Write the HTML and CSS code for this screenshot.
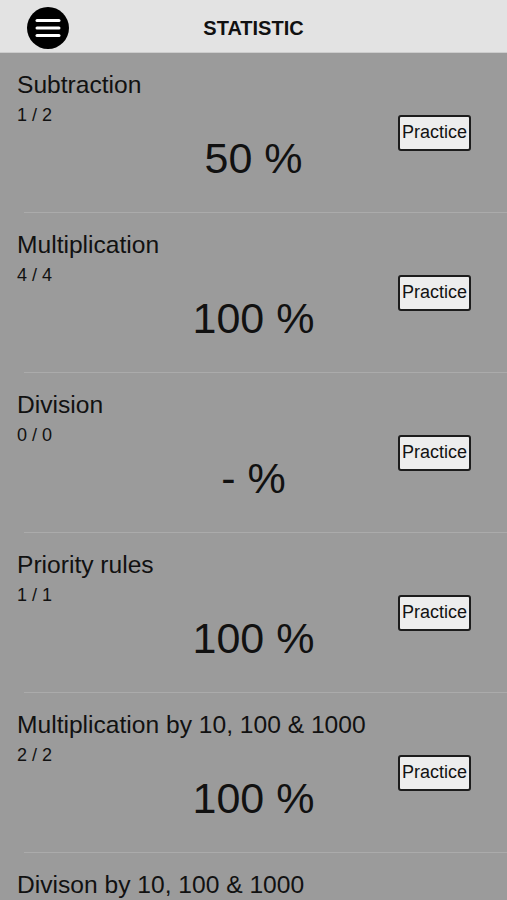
FILE: index.html
```html
<!DOCTYPE html>
<html lang="en">
<head>
<meta charset="utf-8">
<title>Statistic</title>
<link rel="stylesheet" href="styles.css">
</head>
<body>
<div class="app">
  <header class="topbar">
    <button class="menu" aria-label="Menu">
      <svg width="42" height="42" viewBox="0 0 42 42">
        <circle cx="21" cy="21" r="21" fill="#000"/>
        <g stroke="#fff" stroke-width="3" stroke-linecap="round">
          <line x1="10" y1="13.5" x2="32" y2="13.5"/>
          <line x1="10" y1="21" x2="32" y2="21"/>
          <line x1="10" y1="28.5" x2="32" y2="28.5"/>
        </g>
      </svg>
    </button>
    <h1 class="heading">STATISTIC</h1>
    <span class="spacer"></span>
  </header>
  <main class="list">
    <section class="row">
      <div class="info">
        <div class="title">Subtraction</div>
        <div class="count">1 / 2</div>
        <div class="pct">50 %</div>
      </div>
      <button class="practice">Practice</button>
    </section>
    <section class="row">
      <div class="info">
        <div class="title">Multiplication</div>
        <div class="count">4 / 4</div>
        <div class="pct">100 %</div>
      </div>
      <button class="practice">Practice</button>
    </section>
    <section class="row">
      <div class="info">
        <div class="title">Division</div>
        <div class="count">0 / 0</div>
        <div class="pct">- %</div>
      </div>
      <button class="practice">Practice</button>
    </section>
    <section class="row">
      <div class="info">
        <div class="title">Priority rules</div>
        <div class="count">1 / 1</div>
        <div class="pct">100 %</div>
      </div>
      <button class="practice">Practice</button>
    </section>
    <section class="row">
      <div class="info">
        <div class="title">Multiplication by 10, 100 &amp; 1000</div>
        <div class="count">2 / 2</div>
        <div class="pct">100 %</div>
      </div>
      <button class="practice">Practice</button>
    </section>
    <section class="row">
      <div class="info">
        <div class="title">Divison by 10, 100 &amp; 1000</div>
      </div>
    </section>
  </main>
</div>
</body>
</html>
```
FILE: styles.css
```css
html, body {
  margin: 0;
  padding: 0;
}
body {
  font-family: "Liberation Sans", Arial, sans-serif;
  color: #111;
  background: #9b9b9b;
}
.app {
  width: 507px;
  height: 900px;
  overflow: hidden;
  background: #9b9b9b;
}
.topbar {
  box-sizing: border-box;
  height: 53px;
  padding-top: 3px;
  background: #e3e3e3;
  border-bottom: 1px solid #cdcdcd;
  display: grid;
  grid-template-columns: 1fr auto 1fr;
  align-items: center;
}
.menu {
  justify-self: start;
  margin-left: 27px;
  padding: 0;
  border: 0;
  background: none;
  width: 42px;
  height: 42px;
  display: block;
}
.menu svg {
  display: block;
}
.heading {
  margin: 0;
  font-size: 20px;
  font-weight: bold;
  color: #111;
  line-height: 24px;
}
.row {
  box-sizing: border-box;
  height: 160px;
  display: grid;
  grid-template-columns: 1fr;
  grid-template-rows: 159px;
  background: linear-gradient(#ababab, #ababab) no-repeat 24px 100% / calc(100% - 24px) 1px;
}
.info {
  grid-area: 1 / 1;
  padding-top: 18px;
  display: flex;
  flex-direction: column;
}
.title {
  padding-left: 17px;
  font-size: 24.6px;
  line-height: 28px;
  color: #111;
}
.count {
  padding-left: 17px;
  margin-top: 6px;
  font-size: 18px;
  line-height: 20px;
  color: #111;
}
.pct {
  margin-top: 9px;
  text-align: center;
  font-size: 43px;
  line-height: 48px;
  color: #111;
}
.practice {
  grid-area: 1 / 1;
  justify-self: end;
  align-self: center;
  margin-right: 36px;
  box-sizing: border-box;
  width: 73px;
  height: 36px;
  padding: 0;
  border: 2px solid #1c1c1c;
  border-radius: 3px;
  background: #ededed;
  font-family: "Liberation Sans", Arial, sans-serif;
  font-size: 18px;
  color: #111;
}
```
